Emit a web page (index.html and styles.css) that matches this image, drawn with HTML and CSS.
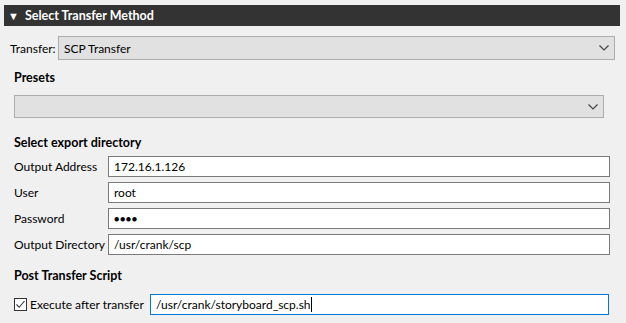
FILE: index.html
```html
<!DOCTYPE html>
<html lang="en">
<head>
  <meta charset="UTF-8">
  <title>Select Transfer Method</title>
  <link rel="stylesheet" href="styles.css">
</head>
<body>
<div class="panel">
  <div class="panel-header">
    <span class="caret">&#9660;</span>
    <span>Select Transfer Method</span>
  </div>

  <div class="transfer-row">
    <span class="transfer-label">Transfer:</span>
    <div class="combo combo-wide">
      <span>SCP Transfer</span>
      <svg class="chevron" width="10" height="6" viewBox="0 0 10 6"><path d="M0.5 0.5 L5 5 L9.5 0.5" fill="none" stroke="#444" stroke-width="1.2"/></svg>
    </div>
  </div>

  <div class="section">
    <h2 class="section-title">Presets</h2>
    <div class="combo combo-presets">
      <span></span>
      <svg class="chevron" width="10" height="6" viewBox="0 0 10 6"><path d="M0.5 0.5 L5 5 L9.5 0.5" fill="none" stroke="#444" stroke-width="1.2"/></svg>
    </div>

    <h2 class="section-title export-title">Select export directory</h2>
    <div class="field-grid">
      <label>Output Address</label>
      <div class="text-box">172.16.1.126</div>
      <label>User</label>
      <div class="text-box">root</div>
      <label>Password</label>
      <div class="text-box dots">&#9679;&#9679;&#9679;&#9679;</div>
      <label>Output Directory</label>
      <div class="text-box">/usr/crank/scp</div>
    </div>

    <h2 class="section-title post-title">Post Transfer Script</h2>
    <div class="script-row">
      <div class="check">
        <span class="check-box">
          <svg width="11" height="11" viewBox="0 0 11 11"><path d="M1.5 5.5 L4.2 8.3 L9.5 2" fill="none" stroke="#333" stroke-width="1.1"/></svg>
        </span>
        <span>Execute after transfer</span>
      </div>
      <div class="text-box focused">/usr/crank/storyboard_scp.sh<span class="cursor"></span></div>
    </div>
  </div>
</div>
</body>
</html>
```

FILE: styles.css
```css
body {
  margin: 0;
  background: #f0f0f0;
  font-family: 'Lato', sans-serif;
  font-size: 12px;
  color: #000;
  white-space: nowrap;
}

.panel {
  padding: 5px 6px 0 4px;
}

.panel-header {
  height: 21px;
  background: #333333;
  color: #fff;
  font-weight: bold;
  font-size: 12.5px;
  display: flex;
  align-items: center;
  gap: 6px;
  padding-left: 4px;
}

.caret {
  font-size: 11px;
}

.transfer-row {
  display: flex;
  align-items: center;
  margin-top: 10px;
  padding-left: 6px;
}

.transfer-label {
  width: 48px;
  flex-shrink: 0;
}

.combo {
  box-sizing: border-box;
  background: #e1e1e1;
  border: 1px solid #adadad;
  display: flex;
  align-items: center;
  justify-content: space-between;
  padding: 0 5px 0 5px;
}

.combo-wide {
  flex: 1;
  height: 24px;
  margin-right: 5px;
}

.combo-presets {
  height: 23px;
  margin-right: 16px;
}

.section {
  padding-left: 10px;
}

.section-title {
  font-size: 12.5px;
  font-weight: bold;
  margin: 9px 0 9px;
  line-height: 17px;
}

.export-title {
  margin: 16px 0 5px;
}

.field-grid {
  display: grid;
  grid-template-columns: 94px 1fr;
  row-gap: 5px;
  margin-right: 10px;
}

.field-grid label {
  display: flex;
  align-items: center;
}

.text-box {
  box-sizing: border-box;
  height: 21px;
  background: #fff;
  border: 1px solid #7a7a7a;
  padding: 0 5px;
  display: flex;
  align-items: center;
}

.dots {
  font-size: 9px;
  letter-spacing: 0.5px;
}

.post-title {
  margin: 12px 0 10px;
}

.script-row {
  display: flex;
  align-items: center;
  margin-right: 11px;
}

.check {
  width: 136px;
  flex-shrink: 0;
  display: flex;
  align-items: center;
  gap: 3px;
}

.check-box {
  box-sizing: border-box;
  width: 13px;
  height: 13px;
  border: 1px solid #333;
  background: #fff;
  display: flex;
  align-items: center;
  justify-content: center;
}

.script-row .text-box {
  flex: 1;
  height: 21px;
}

.focused {
  border-color: #0078d7;
}

.cursor {
  display: inline-block;
  width: 1px;
  height: 15px;
  background: #000;
}
```
